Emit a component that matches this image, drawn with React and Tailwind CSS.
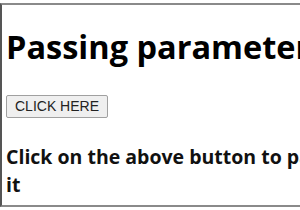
import React from "react";

export default function App() {
  return (
    <div className="w-[300px] h-[210px] bg-white overflow-hidden pt-[3px]">
      <div className="h-[204px] border-t-2 border-l-2 border-b-2 border-[#8a8a8a] border-l-[#555] pl-[4px] overflow-hidden" style={{ fontFamily: '"Open Sans", sans-serif' }}>
        <h1 className="text-[32.5px] font-bold text-black whitespace-nowrap leading-none mt-[26px]">
          Passing parameters
        </h1>
        <button className="mt-[31px] h-[23px] px-[8px] border border-[#a0a0a0] rounded-[2px] bg-[#efefef] text-[14px] text-[#222] leading-none" style={{ fontFamily: '"Liberation Sans", Arial, sans-serif' }}>
          CLICK HERE
        </button>
        <p className="mt-[25px] whitespace-nowrap text-[19.5px] font-bold text-[#111] leading-[28px]">
          Click on the above button to pass parameters to
          <br />
          it
        </p>
      </div>
    </div>
  );
}
